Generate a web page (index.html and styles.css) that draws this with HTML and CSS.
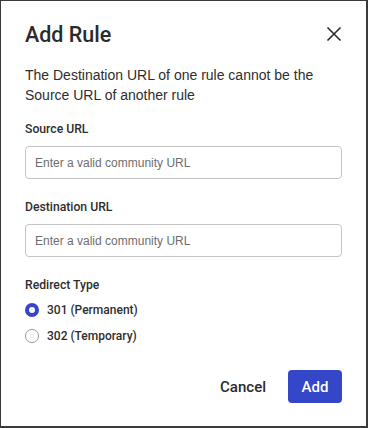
FILE: index.html
```html
<!DOCTYPE html>
<html lang="en">
<head>
  <meta charset="UTF-8" />
  <meta name="viewport" content="width=device-width, initial-scale=1.0"/>
  <title>Add Rule</title>
  <link rel="stylesheet" href="styles.css">
</head>
<body>

  <div class="modal">
    <div class="modal-head">
      <h2>Add Rule</h2>
      <button class="close" aria-label="Close">
        <svg width="16" height="16" viewBox="0 0 16 16"><path d="M1.5 1.5 L14.5 14.5 M14.5 1.5 L1.5 14.5" stroke="#2b2b2b" stroke-width="1.6" fill="none"/></svg>
      </button>
    </div>

    <p class="desc">The Destination URL of one rule cannot be the Source URL of another rule</p>

    <label class="field">
      <span class="label">Source URL</span>
      <input type="text" placeholder="Enter a valid community URL">
    </label>

    <label class="field">
      <span class="label">Destination URL</span>
      <input type="text" placeholder="Enter a valid community URL">
    </label>

    <div class="field">
      <span class="label">Redirect Type</span>
      <div class="radios">
        <label class="radio"><span class="dot checked"></span>301 (Permanent)</label>
        <label class="radio"><span class="dot"></span>302 (Temporary)</label>
      </div>
    </div>

    <div class="actions">
      <button class="btn-link">Cancel</button>
      <button class="btn-primary">Add</button>
    </div>
  </div>

</body>
</html>
```

FILE: styles.css
```css
body {
  margin: 0;
  font-family: 'Liberation Sans', Arial, sans-serif;
  color: #2e2e2e;
  background: #fff;
}

.modal {
  width: 368px;
  height: 428px;
  box-sizing: border-box;
  border: 1px solid #3a3a3a;
  border-right-width: 2px;
  border-bottom-width: 2px;
  padding: 18px 24px 0 24px;
}

.modal-head {
  display: flex;
  justify-content: space-between;
  align-items: center;
  height: 30px;
}

.modal-head h2 {
  margin: 0;
  font-family: Roboto, sans-serif;
  font-size: 21.5px;
  font-weight: 500;
  color: #2b2b2b;
}

.close {
  border: none;
  background: none;
  padding: 0;
  width: 16px;
  height: 16px;
  display: flex;
}

.desc {
  margin: 16px 0 0;
  font-size: 14px;
  line-height: 20px;
}

.field {
  display: flex;
  flex-direction: column;
  margin-top: 20px;
}

.field:first-of-type {
  margin-top: 16px;
}

.label {
  font-family: Roboto, sans-serif;
  font-size: 12.2px;
  font-weight: 500;
  line-height: 16px;
  margin-bottom: 9px;
}

.field input {
  height: 33px;
  box-sizing: border-box;
  border: 1px solid #c4c4c4;
  border-radius: 4px;
  padding: 0 9px;
  font-family: inherit;
  font-size: 12px;
  color: #2e2e2e;
}

.field input::placeholder {
  color: #6e6e6e;
}

.radios {
  display: flex;
  flex-direction: column;
  gap: 12px;
  margin-top: 1px;
}

.radio {
  display: flex;
  align-items: center;
  gap: 8px;
  font-family: Roboto, sans-serif;
  font-size: 12px;
  font-weight: 500;
  line-height: 14px;
}

.dot {
  width: 14px;
  height: 14px;
  box-sizing: border-box;
  border: 1px solid #9a9a9a;
  border-radius: 50%;
  background: #fff;
}

.dot.checked {
  border: 4px solid #3447c9;
}

.actions {
  display: flex;
  justify-content: flex-end;
  align-items: center;
  gap: 22px;
  margin-top: 27px;
}

.btn-link {
  border: none;
  background: none;
  padding: 0;
  font-family: Roboto, sans-serif;
  font-size: 15px;
  font-weight: 500;
  color: #2b2b2b;
}

.btn-primary {
  width: 54px;
  height: 33px;
  border: none;
  border-radius: 4px;
  background: #3447c9;
  color: #fff;
  font-family: Roboto, sans-serif;
  font-size: 15px;
  font-weight: 500;
}
```
